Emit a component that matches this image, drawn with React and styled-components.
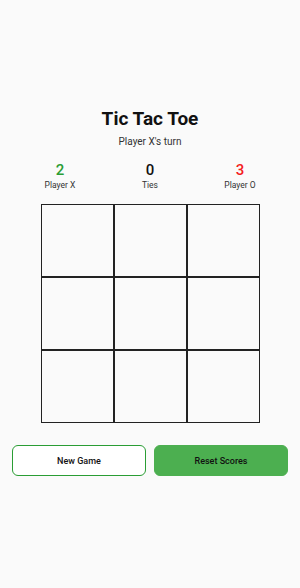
import React, { useState } from "react";
import styled, { createGlobalStyle } from "styled-components";

const GlobalStyle = createGlobalStyle`
  html, body {
    margin: 0;
    padding: 0;
    background: #fafafa;
    font-family: Roboto, "Liberation Sans", sans-serif;
  }
`;

export default function App() {
  const [board, setBoard] = useState(Array(9).fill(null));
  const [turn, setTurn] = useState("X");
  const [scores, setScores] = useState({ x: 2, ties: 0, o: 3 });

  const play = (i) => {
    if (board[i]) return;
    const next = board.slice();
    next[i] = turn;
    setBoard(next);
    setTurn(turn === "X" ? "O" : "X");
  };

  return (
    <Page>
      <GlobalStyle />
      <Title>Tic Tac Toe</Title>
      <Status>Player {turn}'s turn</Status>
      <Scores>
        <Score>
          <ScoreValue color="#2a9d34">{scores.x}</ScoreValue>
          <ScoreLabel>Player X</ScoreLabel>
        </Score>
        <Score>
          <ScoreValue color="#111">{scores.ties}</ScoreValue>
          <ScoreLabel>Ties</ScoreLabel>
        </Score>
        <Score>
          <ScoreValue color="#f41c1c">{scores.o}</ScoreValue>
          <ScoreLabel>Player O</ScoreLabel>
        </Score>
      </Scores>
      <Board>
        {board.map((v, i) => (
          <Cell key={i} onClick={() => play(i)}>
            {v}
          </Cell>
        ))}
      </Board>
      <Actions>
        <Button onClick={() => setBoard(Array(9).fill(null))}>New Game</Button>
        <Button primary onClick={() => setScores({ x: 0, ties: 0, o: 0 })}>
          Reset Scores
        </Button>
      </Actions>
    </Page>
  );
}

const Page = styled.div`
  min-height: 100vh;
  box-sizing: border-box;
  display: flex;
  flex-direction: column;
  justify-content: center;
  align-items: center;
  padding: 0 12px 5px;
`;

const Title = styled.h1`
  margin: 0;
  font-size: 19px;
  font-weight: 700;
  color: #111;
`;

const Status = styled.div`
  margin-top: 6px;
  font-size: 10px;
  color: #333;
`;

const Scores = styled.div`
  display: grid;
  grid-template-columns: repeat(3, 90px);
  margin-top: 15px;
`;

const Score = styled.div`
  display: flex;
  flex-direction: column;
  align-items: center;
`;

const ScoreValue = styled.div`
  font-size: 15px;
  font-weight: 500;
  line-height: 16px;
  color: ${(p) => p.color};
`;

const ScoreLabel = styled.div`
  margin-top: 2px;
  font-size: 8.5px;
  color: #333;
`;

const Board = styled.div`
  display: grid;
  grid-template-columns: repeat(3, 73px);
  grid-template-rows: repeat(3, 73px);
  margin-top: 14px;
`;

const Cell = styled.button`
  box-sizing: border-box;
  border: 1px solid #222;
  background: #fafafa;
  padding: 0;
  font-family: inherit;
  font-size: 32px;
  cursor: pointer;
`;

const Actions = styled.div`
  display: flex;
  gap: 8px;
  align-self: stretch;
  margin-top: 22px;
`;

const Button = styled.button`
  flex: 1;
  height: 31px;
  box-sizing: border-box;
  border-radius: 6px;
  border: 1px solid ${(p) => (p.primary ? "#4caf50" : "#2a9d34")};
  background: ${(p) => (p.primary ? "#4caf50" : "#fff")};
  color: #111;
  font-family: inherit;
  font-size: 9px;
  font-weight: 500;
  cursor: pointer;
`;
